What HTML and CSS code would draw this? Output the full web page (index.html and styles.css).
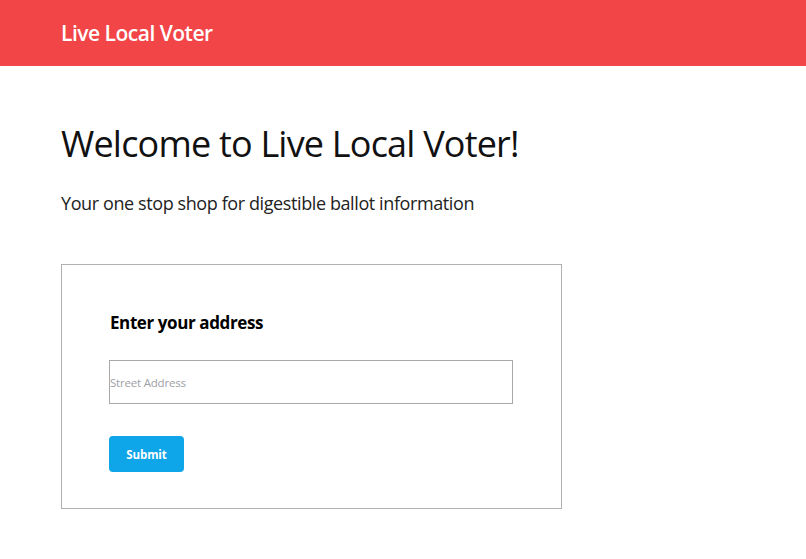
FILE: index.html
```html
<!DOCTYPE html>
<html>
<head>
<meta charset="utf-8">
<link rel="stylesheet" href="styles.css">
</head>
<body>
<header class="topbar">
  <div class="brand">Live Local Voter</div>
</header>
<main class="content">
  <h1 class="title">Welcome to Live Local Voter!</h1>
  <p class="subtitle">Your one stop shop for digestible ballot information</p>
  <section class="card">
    <h2 class="card-title">Enter your address</h2>
    <input class="address" type="text" placeholder="Street Address">
    <button class="submit">Submit</button>
  </section>
</main>
</body>
</html>
```

FILE: styles.css
```css
* { box-sizing: border-box; }
body {
  margin: 0;
  font-family: "Open Sans", "Noto Sans", sans-serif;
  color: #111;
  background: #fff;
}
.topbar {
  height: 66px;
  background: #f24548;
  display: flex;
  align-items: center;
  padding-left: 61px;
}
.brand {
  color: #fff;
  font-size: 21px;
  font-weight: 600;
  letter-spacing: -0.5px;
}
.content {
  padding: 0 61px;
}
.title {
  margin: 56px 0 0;
  font-size: 36px;
  font-weight: 400;
  line-height: 44px;
  letter-spacing: -0.8px;
}
.subtitle {
  margin: 24px 0 0;
  font-size: 18px;
  line-height: 26px;
  color: #222;
  letter-spacing: -0.4px;
}
.card {
  margin-top: 48px;
  width: 501px;
  height: 245px;
  border: 1px solid #b0b0b0;
  padding: 45px 47px 0 47px;
  display: flex;
  flex-direction: column;
  align-items: flex-start;
}
.card-title {
  margin: 0 0 0 1px;
  font-size: 17px;
  font-weight: 700;
  line-height: 26px;
  color: #000;
  letter-spacing: -0.4px;
}
.address {
  margin-top: 24px;
  width: 404px;
  height: 44px;
  border: 1px solid #a8a8a8;
  padding: 0;
  font-family: inherit;
  font-size: 11.5px;
  letter-spacing: -0.2px;
  outline: none;
}
.address::placeholder { color: #a0a0a8; }
.submit {
  margin-top: 32px;
  width: 75px;
  height: 36px;
  border: none;
  border-radius: 4px;
  background: #0ea5e9;
  color: #fff;
  font-family: inherit;
  font-size: 11.5px;
  font-weight: 700;
  letter-spacing: -0.1px;
}
```
